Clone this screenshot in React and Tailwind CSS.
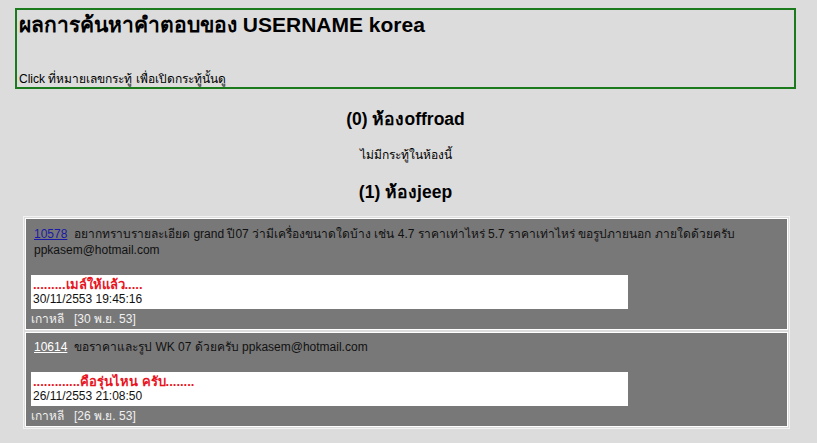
import React from 'react'

const posts = [
  {
    id: '10578',
    idClass: 'text-[#1a1aa6]',
    title:
      'อยากทราบรายละเอียด grand ปี07 ว่ามีเครื่องขนาดใดบ้าง เช่น 4.7 ราคาเท่าไหร่ 5.7 ราคาเท่าไหร่ ขอรูปภายนอก ภายใดด้วยครับ ppkasem@hotmail.com',
    reply: '.........เมล์ให้แล้ว.....',
    time: '30/11/2553 19:45:16',
    user: 'เกาหลี',
    date: '[30 พ.ย. 53]',
  },
  {
    id: '10614',
    idClass: 'text-white',
    title: 'ขอราคาและรูป WK 07 ด้วยครับ ppkasem@hotmail.com',
    reply: '.............คือรุ่นไหน ครับ........',
    time: '26/11/2553 21:08:50',
    user: 'เกาหลี',
    date: '[26 พ.ย. 53]',
  },
]

const font = { fontFamily: 'Tahoma, "Liberation Sans", "Noto Sans", sans-serif' }

const App = () => {
  return (
    <div className="min-h-[443px] bg-[#dcdcdc] text-black pt-2" style={font}>
      <div className="ml-[15px] w-[781px] border-2 border-[#1b7a1b] h-[81px] flex flex-col justify-between px-[2px]">
        <div className="text-[21px] font-bold leading-[28px] mt-[1px]">ผลการค้นหาคำตอบของ USERNAME korea</div>
        <div className="text-[12px] leading-[14px] mb-[1px]">Click ที่หมายเลขกระทู้ เพื่อเปิดกระทู้นั้นดู</div>
      </div>

      <div className="ml-[15px] w-[781px] flex flex-col items-center">
        <div className="mt-[19px] text-[17.5px] font-bold leading-[22px]">(0) ห้องoffroad</div>
        <div className="mt-[18px] text-[12px] leading-[14px]">ไม่มีกระทู้ในห้องนี้</div>
        <div className="mt-[19px] text-[17.5px] font-bold leading-[22px]">(1) ห้องjeep</div>
      </div>

      <div className="ml-[23px] mt-[13px] w-[767px] border border-[#f2f2f2] p-[1px] flex flex-col gap-[2px]">
        {posts.map((p, i) => (
          <div
            key={p.id}
            className={`border border-white bg-[#787878] px-[5px] pb-[2px] text-[12px] leading-[16px] ${i === 0 ? 'pt-[7px]' : 'pt-[6px]'}`}
          >
            <div className="text-[#111] pl-[3px]">
              <a className={`underline ${p.idClass}`} href="#">{p.id}</a>
              <span>&nbsp; {p.title}</span>
            </div>
            <div className="h-[17px]" />
            <div className="w-[597px] bg-white px-[2px] py-[2px] leading-[15px]">
              <div className="text-[#e8141e] font-bold text-[13px]">{p.reply}</div>
              <div className="text-[#111]">{p.time}</div>
            </div>
            <div className="text-[#f0f0f0] pt-[2px]">
              {p.user} &nbsp; {p.date}
            </div>
          </div>
        ))}
      </div>
    </div>
  )
}

export default App
